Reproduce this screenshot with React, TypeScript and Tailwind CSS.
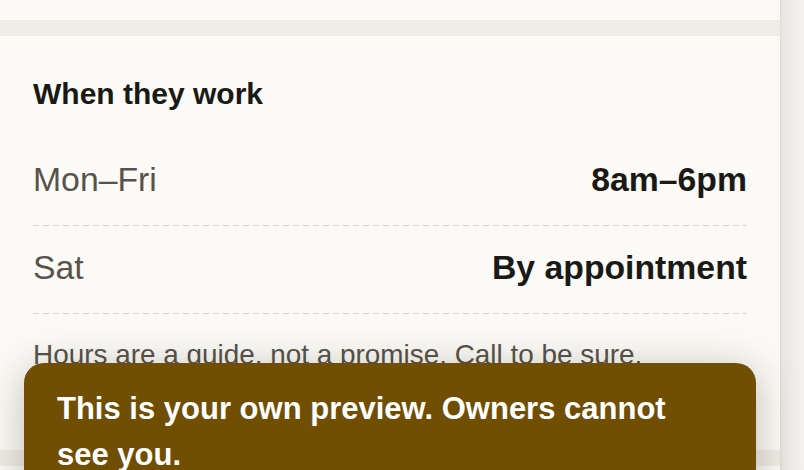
import React from "react";

const hours = [
  { day: "Mon–Fri", time: "8am–6pm" },
  { day: "Sat", time: "By appointment" },
];

function Dashes() {
  return (
    <div className="h-px w-full bg-[repeating-linear-gradient(90deg,#d8d4cb_0px,#d8d4cb_6px,transparent_6px,transparent_10px)]" />
  );
}

export default function App() {
  return (
    <div className="relative flex h-[470px] w-[804px] overflow-hidden bg-[#f0ede6] font-['Liberation_Sans',Arial,sans-serif]">

      <main className="flex w-[780px] shrink-0 flex-col gap-4">

        <div className="h-[20px] shrink-0 bg-[#fbfaf6]" />

        <section className="h-[414px] shrink-0 bg-[#fbfaf6] px-[33px] pt-[40px]">

          <h2 className="mb-[26px] text-[30px] font-bold leading-[36px] text-[#1a1915]">
            When they work
          </h2>

          {hours.map((row) => (
            <div key={row.day}>
              <div className="flex items-center justify-between pb-[26px] pt-[21px] text-[33.75px] leading-[40px]">
                <span className="text-[#57534b]">{row.day}</span>
                <span className="font-bold text-[#1a1915]">{row.time}</span>
              </div>
              <Dashes />
            </div>
          ))}

          <p className="mt-[21px] text-[27.9px] leading-[40px] text-[#57534b]">
            Hours are a guide, not a promise. Call to be sure.
          </p>

        </section>

        <div className="flex-1 bg-[#fbfaf6]" />

      </main>

      <aside className="flex-1 border-l border-[#dfddd8] bg-gradient-to-r from-[#e7e6e2] to-[#f3f2ee]" />

      <div className="absolute left-[24px] top-[363px] w-[732px] rounded-[20px] bg-[#704e04] pb-[30px] pl-[33px] pr-[40px] pt-[23px] shadow-[0_6px_40px_rgba(40,30,10,0.28)]">
        <p className="text-[31px] font-bold leading-[46px] text-white">
          This is your own preview. Owners cannot see you.
        </p>
      </div>

    </div>
  );
}
